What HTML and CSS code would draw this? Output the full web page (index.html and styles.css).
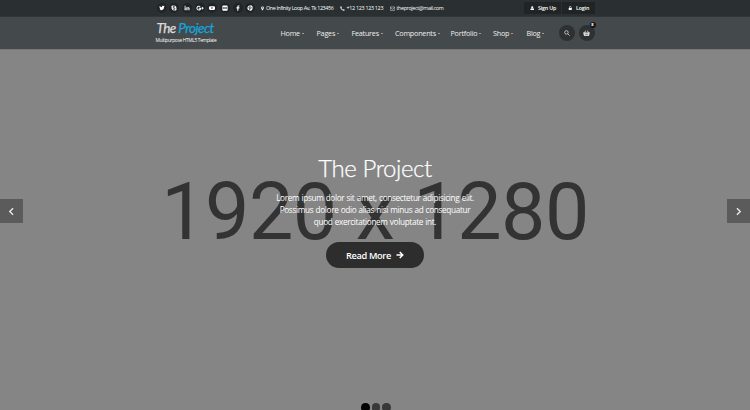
FILE: index.html
```html
<!DOCTYPE html>
<html lang="en">
<head>
<meta charset="utf-8">
<title>The Project</title>
<link rel="stylesheet" href="styles.css">
</head>
<body>
<div class="topbar">
  <div class="container">
    <div class="social">
      <a><svg viewBox="0 0 16 16"><path d="M15 4l-1.500 1.400C13.500 11 9.500 14 5.500 14 3.500 14 2 13.400 1 12.700c1.600 0 2.800-.4 3.700-1.200-1.300-.2-2.200-1-2.600-2h1.200C2 9 1.200 7.800 1.200 6.300l1.200.3C1.200 5.600.9 4 1.700 2.700 3.300 4.600 5.300 5.700 7.800 5.800 7.300 3.500 8.800 2 10.600 2c.9 0 1.600.4 2.100.9L14.500 2.300l-.9 1.900z"/></svg></a>
      <a><svg viewBox="0 0 16 16"><path fill-rule="evenodd" d="M4.500 1a3.500 3.500 0 0 1 2 .7A6.500 6.500 0 0 1 14.300 9.500 3.500 3.500 0 0 1 9.500 14.300 6.500 6.500 0 0 1 1.700 6.500 3.500 3.500 0 0 1 4.500 1zM8 3.500C5.800 3.500 4.600 4.500 4.600 6c0 2.800 5 2 5 3.700 0 1.300-2.800 1.200-3.500-.3l-1.500.5c.5 3.200 7 3.500 7-.4 0-3.300-5-2.300-5-3.700 0-.9 2-1 2.900.3l1.500-.7C10.500 4 9.500 3.500 8 3.500z"/></svg></a>
      <a><svg viewBox="0 0 16 16"><path d="M1.500 6h3v8h-3zM1.500 2h3v2.600h-3zM6.300 6h3v1.200c1.400-2.200 5.500-1.800 5.500 2V14h-3V9.500c0-1.800-2.500-1.800-2.500 0V14h-3z"/></svg></a>
      <a class="wide"><svg viewBox="0 0 20 16"><path d="M7 7h6c.5 4-1.800 7-5.800 7A6 6 0 1 1 11.300 3.700L9.600 5.400C7.300 3.200 3.500 4.800 3.500 8s4.700 5.100 6.500 1.500H7zM15.500 5h2v2h2v2h-2v2h-2V9h-2V7h2z"/></svg></a>
      <a><svg viewBox="0 0 16 16"><path fill-rule="evenodd" d="M3 3h10q3 0 3 3v4q0 3-3 3H3q-3 0-3-3V6q0-3 3-3zM6.300 5.500v5l4.500-2.500z"/></svg></a>
      <a><svg viewBox="0 0 16 16"><path fill-rule="evenodd" d="M3 1h10q2 0 2 2v10q0 2-2 2H3q-2 0-2-2V3q0-2 2-2zM3.200 6v4h4V6zM8.800 6v4h4V6z"/></svg></a>
      <a><svg viewBox="0 0 16 16"><path d="M6 15V9H4V6.300h2V4.500C6 2 7.500 1 9.500 1H12v2.500h-1.500C9.400 3.500 9 4 9 4.800v1.500h3L11.600 9H9v6z"/></svg></a>
      <a><svg viewBox="0 0 16 16"><path fill-rule="evenodd" d="M8 1a7 7 0 1 1-2 13.700L7 11c2 1.500 5-.3 5-3.500 0-5-8-5-8-.3 0 1.200.5 2 1.300 2.400l.5-1.300C4.500 5 9.500 4 10 7c.2 2.500-2 4-2.700 2.500L8.200 6.500H6.500L5 14.300A7 7 0 0 1 8 1z"/></svg></a>
    </div>
    <ul class="contact">
      <li class="c-addr"><svg class="pin" viewBox="0 0 10 16"><path fill-rule="evenodd" d="M5 1a4.500 4.500 0 0 1 4.500 4.500C9.500 8 7 12 5 15 3 12 .5 8 .5 5.500A4.500 4.500 0 0 1 5 1zm0 2.700a2 2 0 1 0 0 4 2 2 0 0 0 0-4z"/></svg><span>One Infinity Loop Av, Tk 123456</span></li>
      <li class="c-tel"><svg viewBox="0 0 16 16"><path d="M4 1l2 4-1.800 1.600c1 2.300 2.800 4.200 5.200 5.200L11 10l4 2c0 2-1.500 3-3 3C6 14.500 1.500 9.500 1 4c0-1.500 1.300-3 3-3z"/></svg><span>+12 123 123 123</span></li>
      <li class="c-mail"><svg class="line" viewBox="0 0 16 16"><path d="M1 3h14v11H1zM1 5l7 5 7-5"/></svg><span>theproject@mail.com</span></li>
    </ul>
    <div class="account">
      <a class="signup"><svg viewBox="0 0 16 16"><path d="M8 1a3.800 3.800 0 0 1 0 7.600A3.800 3.800 0 0 1 8 1zM4.500 8c2 2 5 2 7 0 2 .5 3 3 3 7h-13c0-4 1-6.500 3-7z"/></svg><span>Sign Up</span></a>
      <a class="login"><svg viewBox="0 0 16 16"><path fill-rule="evenodd" d="M2.500 7H4V5a4 4 0 0 1 8 0v2h1.500v8h-11zM6 7h4V5a2 2 0 0 0-4 0z"/></svg><span>Login</span></a>
    </div>
  </div>
</div>
<header class="header">
  <div class="container">
    <div class="brand">
      <div class="logo"><span class="the">The</span> <span class="project">Project</span></div>
      <div class="slogan">Multipurpose HTML5 Template</div>
    </div>
    <nav class="nav">
      <a class="n1">Home</a><a class="n2">Pages</a><a class="n3">Features</a><a class="n4">Components</a><a class="n5">Portfolio</a><a class="n6">Shop</a><a class="n7">Blog</a>
    </nav>
    <div class="tools">
      <button aria-label="Search"><svg class="line" viewBox="0 0 16 16"><circle cx="6.500" cy="6.500" r="4.700"/><path d="M10 10l5 5"/></svg></button>
      <button aria-label="Cart"><svg class="basket" viewBox="0 0 18 16"><path fill-rule="evenodd" d="M0 6h3l3-5 1.500.8L5.500 6h7l-2-4.200L12 1l3 5h3v2h-1l-1.500 7h-13L1 8H0zM5 9v4h1V9zm3.500 0v4h1V9zM12 9v4h1V9z"/></svg><span class="count">8</span></button>
    </div>
  </div>
</header>
<main class="hero">
  <div class="placeholder">1920 x 1280</div>
  <a class="arrow prev" aria-label="Previous"><svg viewBox="0 0 8 10"><path d="M5.800 1.300L2 5l3.800 3.700"/></svg></a>
  <div class="caption">
    <h1>The Project</h1>
    <p><span class="l1">Lorem ipsum dolor sit amet, consectetur adipisicing elit.</span><span class="l2">Possimus dolore odio alias nisi minus ad consequatur</span><span class="l3">quod exercitationem voluptate int.</span></p>
    <a class="more"><span>Read More</span><svg viewBox="0 0 16 16"><path d="M1 8h12M7.500 2l6 6-6 6"/></svg></a>
  </div>
  <a class="arrow next" aria-label="Next"><svg viewBox="0 0 8 10"><path d="M2.200 1.300L6 5 2.200 8.700"/></svg></a>
  <div class="dots"><i class="on"></i><i></i><i></i></div>
</main>
</body>
</html>
```
FILE: styles.css
```css
* { box-sizing: border-box; }
body { margin: 0; width: 750px; height: 410px; overflow: hidden; display: flex; flex-direction: column; background: #858585; color: #fff; font-family: "Open Sans", sans-serif; }
svg { display: block; fill: currentColor; flex: none; }
svg.line { fill: none; stroke: currentColor; stroke-width: 2; }
.container { width: 439px; margin: 0 auto; display: flex; height: 100%; }
.topbar { height: 17px; flex: none; background: #2a2f31; border-bottom: 1px solid #303537; }
.social { display: flex; gap: 2.700px; align-items: center; width: 105.500px; flex: none; padding-left: 1px; }
.social a { width: 10px; height: 10px; flex: none; border-radius: 50%; background: #202425; display: flex; align-items: center; justify-content: center; }
.social svg { width: 6px; height: 6px; }
.social .wide svg { width: 8px; height: 6.400px; }
.contact { list-style: none; margin: 0; padding: 0; display: flex; font-size: 5.400px; width: 262.500px; flex: none; }
.contact li { display: flex; align-items: center; gap: 2px; white-space: nowrap; flex: none; }
.contact svg { width: 5px; height: 5px; }
.contact .pin { width: 3px; }
.c-addr { width: 78.500px; letter-spacing: -.38px; }
.c-tel { width: 50px; letter-spacing: -.3px; }
.c-mail { letter-spacing: -.36px; }
.contact .line { stroke-width: 1.400; }
.account { display: flex; gap: 1px; padding-top: 2px; flex: none; font-size: 5.400px; font-weight: 600; letter-spacing: -.2px; }
.account a { height: 12px; background: #202425; display: flex; align-items: center; gap: 4px; border-radius: 1px; padding-left: 6px; white-space: nowrap; }
.account svg { width: 4.500px; height: 4.500px; }
.signup { width: 37px; }
.login { width: 33px; }
.header { height: 33px; flex: none; background: #44494b; border-bottom: 1px solid #777; }
.header .container { align-items: flex-start; }
.brand { width: 125px; flex: none; }
.logo { height: 19px; padding: 3px 0 0 1px; font: italic 400 13.500px/17px "Lato", cursive; white-space: nowrap; letter-spacing: -.55px; -webkit-text-stroke: .25px currentColor; }
.the { color: #ddd; }
.project { color: #14a5dc; }
.slogan { font-size: 4.800px; line-height: 8px; white-space: nowrap; letter-spacing: -.31px; }
.nav { display: flex; width: 278px; flex: none; font-size: 7.200px; letter-spacing: -.22px; line-height: 10px; padding-top: 11px; color: #eee; }
.nav a { display: flex; align-items: center; gap: 2px; white-space: nowrap; flex: none; }
.nav a::after { content: ""; border: 1.500px solid transparent; border-top-color: currentColor; border-bottom: 0; margin-top: 1px; }
.n1 { width: 36px; } .n2 { width: 35px; } .n3 { width: 43.500px; } .n4 { width: 55.500px; } .n5 { width: 42.500px; } .n6 { width: 33.500px; }
.tools { display: flex; gap: 4px; padding-top: 8px; }
.tools button { position: relative; width: 16px; height: 16px; border: 0; padding: 0; border-radius: 50%; background: #2d3132; color: #ddd; display: flex; align-items: center; justify-content: center; }
.tools svg { width: 6px; height: 6px; }
.tools .basket { width: 7px; height: 6.500px; }
.count { position: absolute; left: 11px; top: -3px; width: 6px; height: 6px; border-radius: 50%; background: #15181a; color: #fff; font: 700 4px/6px "Open Sans", sans-serif; text-align: center; }
.hero { flex: 1; position: relative; display: flex; justify-content: space-between; align-items: flex-start; }
.placeholder { position: absolute; left: 0; right: 0; top: 115px; text-align: center; font: 79px/94px Roboto, sans-serif; letter-spacing: -.55px; color: #333; white-space: nowrap; }
.arrow { position: relative; margin-top: 149px; width: 22.500px; height: 24px; background: #5b5b5b; display: flex; align-items: center; justify-content: center; }
.arrow svg { width: 7px; height: 9px; fill: none; stroke: #eee; stroke-width: 1.500; }
.caption { position: relative; padding-top: 102px; display: flex; flex-direction: column; align-items: center; }
h1 { margin: 0; font: 300 24px/32px "Lato", sans-serif; letter-spacing: -.42px; -webkit-text-stroke: .25px #fff; white-space: nowrap; }
p { margin: 8px 0 0; font-size: 8.200px; letter-spacing: -.32px; word-spacing: .4px; line-height: 12px; display: flex; flex-direction: column; align-items: center; white-space: nowrap; }
.more { margin-top: 14px; width: 98px; height: 26px; border-radius: 13px; background: #2d2d2d; display: flex; align-items: center; justify-content: center; gap: 5px; font-size: 9.200px; letter-spacing: -.35px; font-weight: 600; }
.more svg { width: 8px; height: 8px; fill: none; stroke: #fff; stroke-width: 3; }
.dots { position: absolute; left: 361px; top: 353px; display: flex; gap: 2px; }
.dots i { width: 8.500px; height: 8.500px; border-radius: 50%; background: #383838; }
.dots .on { background: #000; }
```
